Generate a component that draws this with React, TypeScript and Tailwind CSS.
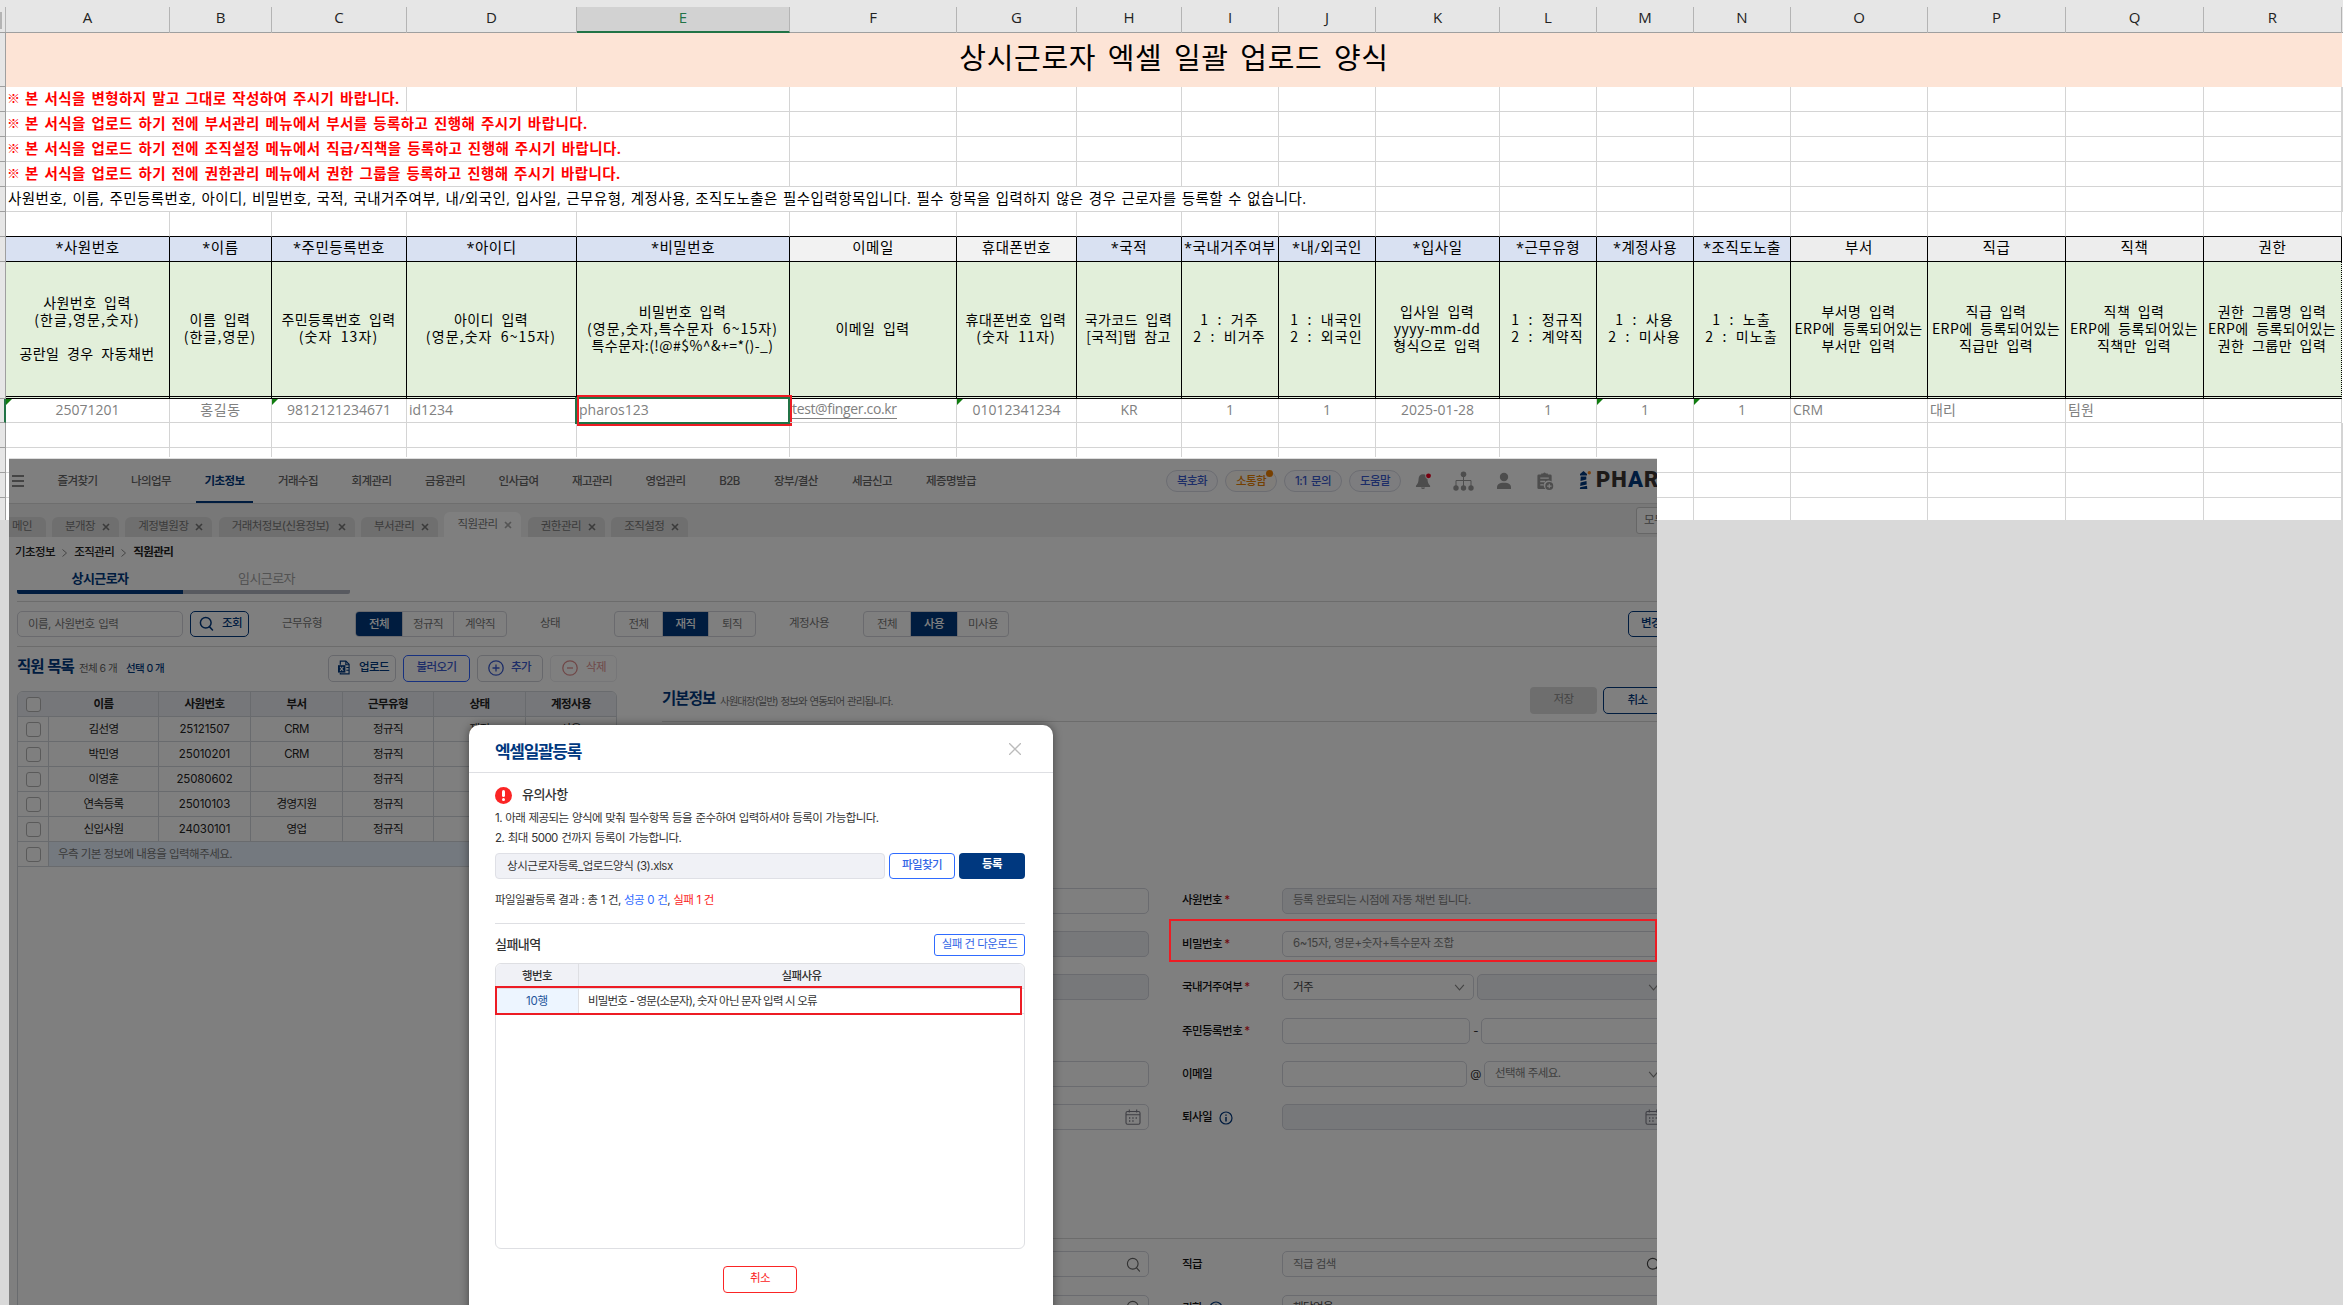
import type { ReactNode } from "react";
import clsx from "clsx";

const GRID =
  "grid grid-cols-[164px_102px_135px_170px_213px_167px_120px_105px_97px_97px_124px_97px_97px_97px_137px_138px_138px_138px_1px]";

type Column = {
  letter: string;
  title: string;
  guide: string[];
  value: string;
  tone: "blue" | "gray" | "silver";
  left?: boolean;
  flag?: boolean;
};

const columns: Column[] = [
  { letter: "A", title: "*사원번호", guide: ["사원번호 입력", "(한글,영문,숫자)", "", "공란일 경우 자동채번"], value: "25071201", tone: "blue", flag: true },
  { letter: "B", title: "*이름", guide: ["이름 입력", "(한글,영문)"], value: "홍길동", tone: "blue" },
  { letter: "C", title: "*주민등록번호", guide: ["주민등록번호 입력", "(숫자 13자)"], value: "9812121234671", tone: "blue", flag: true },
  { letter: "D", title: "*아이디", guide: ["아이디 입력", "(영문,숫자 6~15자)"], value: "id1234", tone: "blue", left: true },
  { letter: "E", title: "*비밀번호", guide: ["비밀번호 입력", "(영문,숫자,특수문자 6~15자)", "특수문자:(!@#$%^&+=*()-_)"], value: "pharos123", tone: "blue", left: true },
  { letter: "F", title: "이메일", guide: ["이메일 입력"], value: "test@finger.co.kr", tone: "gray", left: true },
  { letter: "G", title: "휴대폰번호", guide: ["휴대폰번호 입력", "(숫자 11자)"], value: "01012341234", tone: "gray", flag: true },
  { letter: "H", title: "*국적", guide: ["국가코드 입력", "[국적]탭 참고"], value: "KR", tone: "blue" },
  { letter: "I", title: "*국내거주여부", guide: ["1 : 거주", "2 : 비거주"], value: "1", tone: "blue" },
  { letter: "J", title: "*내/외국인", guide: ["1 : 내국인", "2 : 외국인"], value: "1", tone: "blue" },
  { letter: "K", title: "*입사일", guide: ["입사일 입력", "yyyy-mm-dd", "형식으로 입력"], value: "2025-01-28", tone: "blue" },
  { letter: "L", title: "*근무유형", guide: ["1 : 정규직", "2 : 계약직"], value: "1", tone: "blue" },
  { letter: "M", title: "*계정사용", guide: ["1 : 사용", "2 : 미사용"], value: "1", tone: "blue", flag: true },
  { letter: "N", title: "*조직도노출", guide: ["1 : 노출", "2 : 미노출"], value: "1", tone: "blue", flag: true },
  { letter: "O", title: "부서", guide: ["부서명 입력", "ERP에 등록되어있는", "부서만 입력"], value: "CRM", tone: "silver", left: true },
  { letter: "P", title: "직급", guide: ["직급 입력", "ERP에 등록되어있는", "직급만 입력"], value: "대리", tone: "silver", left: true },
  { letter: "Q", title: "직책", guide: ["직책 입력", "ERP에 등록되어있는", "직책만 입력"], value: "팀원", tone: "silver", left: true },
  { letter: "R", title: "권한", guide: ["권한 그룹명 입력", "ERP에 등록되어있는", "권한 그룹만 입력"], value: "", tone: "silver" },
];

const toneClass = {
  blue: "bg-[#d9e1f2]",
  gray: "bg-[#f2f2f2]",
  silver: "bg-[#ededed]",
};

const notices = [
  { text: "본 서식을 변형하지 말고 그대로 작성하여 주시기 바랍니다.", span: 3 },
  { text: "본 서식을 업로드 하기 전에 부서관리 메뉴에서 부서를 등록하고 진행해 주시기 바랍니다.", span: 5 },
  { text: "본 서식을 업로드 하기 전에 조직설정 메뉴에서 직급/직책을 등록하고 진행해 주시기 바랍니다.", span: 5 },
  { text: "본 서식을 업로드 하기 전에 권한관리 메뉴에서 권한 그룹을 등록하고 진행해 주시기 바랍니다.", span: 5 },
];

function EmptyCells({ count }: { count: number }) {
  return (
    <>
      {Array.from({ length: count }, (_, i) => (
        <div key={i} className="border-r border-b border-[#d4d4d4]" />
      ))}
    </>
  );
}

function SheetRow({ className, gutter, children }: { className: string; gutter?: string; children: ReactNode }) {
  return (
    <div className={clsx("flex", className)}>
      <div className={clsx("w-[6px] shrink-0 border-b bg-[#e6e6e6]", gutter ?? "border-r border-[#9f9f9f]")} />
      <div className={GRID}>{children}</div>
    </div>
  );
}

function Spreadsheet() {
  return (
    <section className="h-[520px] overflow-hidden bg-white font-['Open_Sans','Noto_Sans_CJK_KR',sans-serif]">
      <div className="flex h-[33px] border-b border-[#9f9f9f] bg-[#e6e6e6] pt-[7px]">
        <div className="w-[6px] shrink-0 border-r border-[#b4b4b4]">
          <div className="mt-[5px] h-[17px] w-[2px] bg-[#b4b4b4]" />
        </div>
        <div className={GRID}>
          {columns.map((column) => (
            <div
              key={column.letter}
              className={clsx(
                "flex h-[26px] items-center justify-center border-r border-[#b4b4b4] text-[15px]",
                column.letter === "E" ? "border-b-2 border-b-[#217346] bg-[#d2d2d2] pb-[3px] text-[#217346]" : "pb-[5px] text-[#222]",
              )}
            >
              {column.letter}
            </div>
          ))}
        </div>
      </div>

      <div className="flex h-[54px]">
        <div className="w-[6px] shrink-0 border-r border-b border-[#9f9f9f] bg-[#e6e6e6]" />
        <h1 className="flex w-[2336px] items-center justify-center bg-[#fde4d6] pb-[5px] text-[29px] tracking-[0.7px] [word-spacing:3.3px] text-black">
          상시근로자 엑셀 일괄 업로드 양식
        </h1>
      </div>

      {notices.map((notice) => (
        <SheetRow key={notice.text} className="h-[25px]">
          <div
            className={clsx(
              "flex border-r border-b border-[#d4d4d4] pl-[1px] text-[14.5px] leading-[23px] font-bold tracking-[0.42px] whitespace-nowrap text-[#f00] [word-spacing:1.5px]",
              notice.span === 3 ? "col-span-3" : "col-span-5",
            )}
          >
            <span className="w-[18px] text-[13px]">※</span>
            {notice.text}
          </div>
          <EmptyCells count={19 - notice.span} />
        </SheetRow>
      ))}

      <SheetRow className="h-[25px]">
        <div className="col-span-10 border-r border-b border-[#d4d4d4] pl-[2px] text-[14.5px] leading-[23px] tracking-[0.43px] whitespace-nowrap text-black [word-spacing:1px]">
          사원번호, 이름, 주민등록번호, 아이디, 비밀번호, 국적, 국내거주여부, 내/외국인, 입사일, 근무유형, 계정사용, 조직도노출은
          필수입력항목입니다. 필수 항목을 입력하지 않은 경우 근로자를 등록할 수 없습니다.
        </div>
        <EmptyCells count={9} />
      </SheetRow>

      <SheetRow className="h-[25px]">
        {columns.map((column) => (
          <div key={column.letter} className="border-r border-b border-r-[#d4d4d4] border-b-black" />
        ))}
      </SheetRow>

      <SheetRow className="h-[25px]">
        {columns.map((column) => (
          <div
            key={column.letter}
            className={clsx(
              "flex items-center justify-center border-r border-b border-black pb-[2px] text-[14.5px] tracking-[0.55px] whitespace-nowrap text-black",
              toneClass[column.tone],
            )}
          >
            {column.title}
          </div>
        ))}
      </SheetRow>

      <SheetRow className="h-[137px]">
        {columns.map((column) => (
          <div
            key={column.letter}
            className={clsx(
              "flex flex-col items-center justify-center border-r border-b-3 border-double border-black bg-[#e2efda] pr-px pb-[2px]",
              column.letter === "R" ? "[border-right-style:dotted]" : "[border-right-style:solid]",
            )}
          >
            {column.guide.map((line, i) => (
              <p
                key={i}
                className={clsx(
                  "h-[17px] font-['Noto_Sans_CJK_KR',sans-serif] text-[14px] leading-[17px] whitespace-nowrap text-black [word-spacing:4px]",
                  /^[(\d]/.test(line) ? "tracking-[1.1px]" : "tracking-[0.45px]",
                )}
              >
                {line}
              </p>
            ))}
          </div>
        ))}
      </SheetRow>

      <SheetRow className="h-[24px]" gutter="border-r-2 border-r-[#217346] border-b-[#9f9f9f]">
        {columns.map((column) => (
          <div
            key={column.letter}
            className={clsx(
              "relative flex items-center border-r border-b border-[#d4d4d4] pb-[2px] text-[14px] whitespace-nowrap text-[#808080]",
              column.left ? "pl-[2px]" : "justify-center",
            )}
          >
            {column.flag && (
              <span className="absolute top-0 left-0 border-t-[6px] border-r-[6px] border-t-[#107c10] border-r-transparent" />
            )}
            <span
              className={clsx(
                column.letter === "F" && "border-b border-[#808080] leading-[18px] tracking-[-0.35px]",
                column.letter === "B" && "tracking-[0.6px]",
              )}
            >
              {column.value}
            </span>
            {column.letter === "E" && (
              <>
                <span className="absolute -top-[2px] -right-px -bottom-[2px] -left-[2px] border-2 border-[#217346]" />
                <span className="absolute -top-[4px] -right-[3px] -bottom-[4px] left-0 border-2 border-[#ed1c24]" />
              </>
            )}
          </div>
        ))}
      </SheetRow>

      {[0, 1, 2, 3].map((row) => (
        <SheetRow key={row} className="h-[25px]">
          <EmptyCells count={19} />
        </SheetRow>
      ))}
    </section>
  );
}

const menus = [
  { label: "즐겨찾기", width: "w-[57px]" },
  { label: "나의업무", width: "w-[57px]" },
  { label: "기초정보", width: "w-[57px]", active: true },
  { label: "거래수집", width: "w-[57px]" },
  { label: "회계관리", width: "w-[57px]" },
  { label: "금융관리", width: "w-[57px]" },
  { label: "인사급여", width: "w-[57px]" },
  { label: "재고관리", width: "w-[57px]" },
  { label: "영업관리", width: "w-[57px]" },
  { label: "B2B", width: "w-[38px]" },
  { label: "장부/결산", width: "w-[62px]" },
  { label: "세금신고", width: "w-[57px]" },
  { label: "제증명발급", width: "w-[68px]" },
];

const pageTabs = [
  { label: "분개장", width: "w-[67px]" },
  { label: "계정별원장", width: "w-[87px]" },
  { label: "거래처정보(신용정보)", width: "w-[136px]" },
  { label: "부서관리", width: "w-[77px]" },
  { label: "직원관리", width: "w-[77px]", active: true },
  { label: "권한관리", width: "w-[77px]" },
  { label: "조직설정", width: "w-[77px]" },
];

function SearchIcon({ className }: { className?: string }) {
  return (
    <svg viewBox="0 0 16 16" className={className} fill="none" stroke="currentColor">
      <circle cx="7.2" cy="7.2" r="5.7" />
      <path d="M11.3 11.6 14.4 15" strokeLinecap="round" />
    </svg>
  );
}

function CalendarIcon() {
  return (
    <svg viewBox="0 0 16 16" className="size-4 shrink-0 text-[#7d7d88]" fill="none" stroke="currentColor" strokeWidth="1.1">
      <rect x="1" y="2.5" width="14" height="12.8" rx="1.5" />
      <path d="M1 5.8h14M4.3.6v3M11.7.6v3" />
      <path d="M4 9h1.3M7.3 9h1.3M10.6 9h1.3M4 12h1.3M7.3 12h1.3" strokeWidth="1.5" />
    </svg>
  );
}

function ChevronIcon() {
  return (
    <svg viewBox="0 0 12 8" className="h-[7px] w-[11px] shrink-0" fill="none" stroke="#888" strokeWidth="1.3">
      <path d="m1 1 5 5.6L11 1" />
    </svg>
  );
}

function InfoIcon() {
  return (
    <svg viewBox="0 0 14 14" className="size-[14px] shrink-0" fill="none" stroke="#00387f" strokeWidth="1.2">
      <circle cx="7" cy="7" r="6" />
      <path d="M7 6v4.5M7 3.4v1.4" strokeWidth="1.5" />
    </svg>
  );
}

function HeaderIcons() {
  return (
    <div className="flex items-center text-[#9a9a9a]">
      <svg viewBox="0 0 18 20" className="ml-[14px] h-[19px] w-[17px]" fill="currentColor">
        <path d="M8.5 2.2c-3 0-4.6 2-4.7 5-.1 3.6-.8 5.3-2.8 7.3v1.3h15v-1.3c-2-2-2.7-3.7-2.8-7.3-.1-3-1.7-5-4.7-5ZM6.3 16.4a2.3 2.3 0 0 0 4.4 0Z" />
        <circle cx="14.3" cy="4" r="3.4" fill="#fff" />
        <circle cx="14.3" cy="4" r="2.6" fill="#f00020" />
      </svg>
      <svg viewBox="0 0 21 20" className="ml-[21px] h-[20px] w-[21px]" fill="currentColor">
        <circle cx="10.5" cy="3.2" r="2.8" />
        <circle cx="3" cy="17" r="2.7" />
        <circle cx="10.5" cy="17" r="2.7" />
        <circle cx="18" cy="17" r="2.7" />
        <path d="M10.5 4v12M3 16V9.5h15V16" fill="none" stroke="currentColor" />
      </svg>
      <svg viewBox="0 0 16 18" className="ml-[22px] h-[18px] w-[16px]" fill="currentColor">
        <circle cx="8" cy="5" r="4.2" />
        <path d="M1 17v-1.5c0-3 2-4.7 7-4.7s7 1.7 7 4.7V17Z" />
      </svg>
      <svg viewBox="0 0 18 20" className="ml-[24px] h-[19px] w-[18px]" fill="currentColor">
        <path d="M2.5 2.5H5v-1h2a2 2 0 0 1 3 0h2v1h2.5A1.5 1.5 0 0 1 16 4v6a5 5 0 0 0-6.5 8h-7A1.5 1.5 0 0 1 1 16.5V4a1.5 1.5 0 0 1 1.5-1.5Z" />
        <path d="M4 6.5h9M4 10h5M4 13.5h3.5" stroke="#fff" strokeWidth="1.4" />
        <circle cx="13.5" cy="14.8" r="4.2" />
        <path d="M13.5 12.4v4.8M11.1 14.8h4.8" stroke="#fff" strokeWidth="1.2" />
      </svg>
      <div className="ml-[25px] flex items-center pb-[2px]">
        <svg viewBox="0 0 13 20" className="h-[20px] w-[13px]">
          <path d="M4.5 1 8 4v1.5H1V4Z" fill="#00387f" />
          <path d="M1.7 6.5h5.6v3L1.5 11ZM1.5 12.5l6-1.5.2 3.5-6.5 1.5ZM1.2 17.2l6.8-1.5.3 3.3H.8Z" fill="#00387f" />
          <circle cx="10.3" cy="2.8" r="1.7" fill="#ff8a1e" />
        </svg>
        <span className="ml-[4px] font-['Roboto',sans-serif] text-[22px] leading-none font-black tracking-[1px] text-[#3a3532]">
          PH<span className="text-[#00387f]">A</span>R
        </span>
      </div>
    </div>
  );
}

function AppHeader() {
  return (
    <header className="flex h-[45px] items-stretch border-b border-[#dcdcdc] whitespace-nowrap">
      <div className="mr-[25px] ml-[3px] flex w-[12px] shrink-0 flex-col justify-center gap-[3px]">
        <span className="h-[2px] bg-[#888]" />
        <span className="h-[2px] bg-[#888]" />
        <span className="h-[2px] bg-[#888]" />
      </div>
      <nav className="flex gap-[16.5px]">
        {menus.map((menu) => (
          <div
            key={menu.label}
            className={clsx(
              "flex shrink-0 items-center justify-center border-b-2 pt-[3px] text-[11.5px]",
              menu.width,
              menu.active ? "border-[#00387f] font-bold text-[#00387f]" : "border-transparent font-medium text-[#666]",
            )}
          >
            {menu.label}
          </div>
        ))}
      </nav>
      <div className="ml-[181px] flex shrink-0 items-center gap-[7px] text-[11.5px] font-medium text-[#3a5bd0]">
        <span className="h-[22px] w-[52px] rounded-full border border-[#d8dae4] bg-[#fafbff] text-center leading-[20px]">복호화</span>
        <span className="relative h-[22px] w-[52px] rounded-full border border-[#d8dae4] bg-[#fffaf5] text-center leading-[20px] text-[#e88000]">
          소통함
          <i className="absolute -top-px right-[3px] size-[7px] rounded-full bg-[#f08000]" />
        </span>
        <span className="h-[22px] w-[58px] rounded-full border border-[#d8dae4] bg-[#fafbff] text-center leading-[20px] [word-spacing:2px]">
          1:1 문의
        </span>
        <span className="h-[22px] w-[52px] rounded-full border border-[#d8dae4] bg-[#fafbff] text-center leading-[20px]">도움말</span>
      </div>
      <HeaderIcons />
    </header>
  );
}

function PageTabs() {
  return (
    <div className="flex h-[33px] items-end gap-[6.4px] bg-[#f1f1f1] whitespace-nowrap text-[#777]">
      <div className="h-[20px] w-[36.5px] shrink-0 rounded-tr-[6px] bg-[#dedede] pl-[3px] leading-[19px]">메인</div>
      {pageTabs.map((tab) => (
        <div
          key={tab.label}
          className={clsx(
            "flex shrink-0 items-center justify-between rounded-t-[6px] pr-[9px] pl-[13px]",
            tab.width,
            tab.active ? "h-[25px] bg-white" : "h-[20px] bg-[#dedede]",
          )}
        >
          <span>{tab.label}</span>
          <svg viewBox="0 0 8 8" className="size-[8px]" stroke={tab.active ? "#aaa" : "#777"} strokeWidth="1.6">
            <path d="m1 1 6 6M7 1 1 7" />
          </svg>
        </div>
      ))}
      <div className="-mr-[39px] mb-[3px] ml-auto h-[27px] w-[60px] shrink-0 rounded-[3px] border border-[#ccc] bg-white pl-[7px] leading-[24px]">
        모두
      </div>
    </div>
  );
}

type SegmentOption = { label: string; width: string; active?: boolean };

function Segmented({ options }: { options: SegmentOption[] }) {
  return (
    <div className="flex h-[26px] shrink-0 overflow-hidden rounded-[4px] border border-[#d4d5dc]">
      {options.map((option) => (
        <span
          key={option.label}
          className={clsx(
            "border-r border-[#d4d5dc] text-center leading-[24px] last:border-r-0",
            option.width,
            option.active ? "bg-[#00387f] font-medium text-white" : "text-[#777]",
          )}
        >
          {option.label}
        </span>
      ))}
    </div>
  );
}

function FilterBar() {
  return (
    <div className="ml-[8px] flex h-[46px] items-center border-y border-[#d8d8d8] whitespace-nowrap text-[#777]">
      <div className="h-[26px] w-[166px] rounded-[5px] border border-[#d4d5dc] pl-[10px] leading-[24px] [word-spacing:1px]">
        이름, 사원번호 입력
      </div>
      <div className="ml-[7px] flex h-[26px] w-[59px] items-center gap-[8px] rounded-[5px] border border-[#00387f] pb-px pl-[8px] font-medium text-[#00387f]">
        <SearchIcon className="size-[15px] stroke-[1.6]" />
        조회
      </div>
      <span className="ml-[33px] w-[73px]">근무유형</span>
      <Segmented
        options={[
          { label: "전체", width: "w-[47px]", active: true },
          { label: "정규직", width: "w-[51px]" },
          { label: "계약직", width: "w-[52px]" },
        ]}
      />
      <span className="ml-[33px] w-[74px]">상태</span>
      <Segmented
        options={[
          { label: "전체", width: "w-[48px]" },
          { label: "재직", width: "w-[46px]", active: true },
          { label: "퇴직", width: "w-[46px]" },
        ]}
      />
      <span className="ml-[33px] w-[74px]">계정사용</span>
      <Segmented
        options={[
          { label: "전체", width: "w-[47px]" },
          { label: "사용", width: "w-[47px]", active: true },
          { label: "미사용", width: "w-[50px]" },
        ]}
      />
      <div className="-mr-[31px] ml-auto h-[26px] w-[60px] rounded-[5px] border border-[#00387f] pl-[12px] leading-[23px] font-medium text-[#00387f]">
        변경
      </div>
    </div>
  );
}

const employees = [
  { name: "김선영", no: "25121507", dept: "CRM", status: "재직", account: "사용" },
  { name: "박민영", no: "25010201", dept: "CRM" },
  { name: "이영훈", no: "25080602", dept: "" },
  { name: "연속등록", no: "25010103", dept: "경영지원" },
  { name: "신입사원", no: "24030101", dept: "영업" },
];

const LIST_GRID = "grid h-[25px] grid-cols-[31px_110px_92px_92px_91px_92px_90px] border-b border-[#d3d6dc] text-center leading-[25px]";

function Checkbox() {
  return (
    <span className="flex items-center justify-center">
      <i className="size-[15px] rounded-[3px] border border-[#b4b4b4] bg-white" />
    </span>
  );
}

function EmployeeList() {
  return (
    <div className="w-[600px] shrink-0">
      <div className="flex h-[44px] items-center pb-[2px] whitespace-nowrap">
        <h2 className="w-[62px] pb-[2px] text-[15.5px] font-bold tracking-[-1px] text-[#00387f] [word-spacing:1px]">직원 목록</h2>
        <span className="w-[47px] pt-[2px] text-[10.5px] text-[#666]">전체 6 개</span>
        <span className="pt-[2px] text-[10.5px] font-medium text-[#00387f]">선택 0 개</span>
        <div className="ml-auto flex gap-[7px] leading-[23px]">
          <div className="flex h-[27px] w-[68px] items-center gap-[9px] rounded-[5px] border border-[#cfd0d8] pb-px pl-[9px] font-medium text-[#00387f]">
            <svg viewBox="0 0 13 16" className="h-[15px] w-[12px]" fill="none" stroke="#00387f" strokeWidth="1.3">
              <path d="M2.5 5V1h6L12 4.5V15H2.5v-1" />
              <path d="M8.5 1v4H12M9 8h3M9 11h3" />
              <rect x="0" y="5.5" width="8" height="8" fill="#00387f" stroke="none" />
              <path d="m2.3 7.3 3.4 4.4m0-4.4-3.4 4.4" stroke="#fff" strokeWidth="1.1" />
            </svg>
            업로드
          </div>
          <div className="h-[27px] w-[67px] rounded-[5px] border border-[#2f62ff] text-center font-medium text-[#3a5bd0]">불러오기</div>
          <div className="flex h-[27px] w-[66px] items-center gap-[7px] rounded-[5px] border border-[#cfd0d8] pb-px pl-[10px] font-medium text-[#3a5bd0]">
            <svg viewBox="0 0 16 16" className="size-4" fill="none" stroke="currentColor" strokeWidth="1.3">
              <circle cx="8" cy="8" r="7.2" />
              <path d="M8 4.5v7M4.5 8h7" />
            </svg>
            추가
          </div>
          <div className="flex h-[27px] w-[67px] items-center gap-[8px] rounded-[5px] border border-[#ededf0] pb-px pl-[11px] text-[#e09090]">
            <svg viewBox="0 0 16 16" className="size-4" fill="none" stroke="currentColor" strokeWidth="1.3">
              <circle cx="8" cy="8" r="7.2" />
              <path d="M5 8h6" />
            </svg>
            삭제
          </div>
        </div>
      </div>

      <div className="h-[700px] overflow-hidden rounded-t-[6px] border border-[#d3d6dc] text-[#222]">
        <div className={clsx(LIST_GRID, "bg-[#eceff4] font-bold")}>
          <Checkbox />
          {["이름", "사원번호", "부서", "근무유형", "상태", "계정사용"].map((head) => (
            <span key={head} className="border-r border-[#d3d6dc] last:border-r-0">
              {head}
            </span>
          ))}
        </div>
        {employees.map((employee) => (
          <div key={employee.no} className={clsx(LIST_GRID, "*:border-r *:border-[#d3d6dc]")}>
            <Checkbox />
            <span>{employee.name}</span>
            <span className="text-[11.5px] tracking-[-0.1px]">{employee.no}</span>
            <span>{employee.dept}</span>
            <span>정규직</span>
            <span>{employee.status}</span>
            <span className="border-r-0!">{employee.account}</span>
          </div>
        ))}
        <div className="flex h-[25px] border-b border-[#d3d6dc] bg-[#e9f3ff]">
          <div className="flex w-[31px] justify-center border-r border-[#d3d6dc] bg-white">
            <Checkbox />
          </div>
          <span className="pl-[9px] leading-[24px] text-[#777]">우측 기본 정보에 내용을 입력해주세요.</span>
        </div>
      </div>
    </div>
  );
}

function Field({ className, disabled, children }: { className?: string; disabled?: boolean; children?: ReactNode }) {
  return (
    <div
      className={clsx(
        "flex h-[26px] shrink-0 items-center justify-between rounded-[5px] border border-[#d4d6de] pl-[10px] text-[#808080]",
        disabled && "bg-[#eff1f5]",
        className,
      )}
    >
      {children}
    </div>
  );
}

function FormRow({
  label,
  required,
  info,
  left,
  children,
}: {
  label: string;
  required?: boolean;
  info?: boolean;
  left?: ReactNode;
  children: ReactNode;
}) {
  return (
    <div className="flex h-[43.4px] items-start whitespace-nowrap">
      <div className="w-[487px] shrink-0 pl-[100px]">{left}</div>
      <div className="ml-[33px] flex h-[27px] w-[100px] shrink-0 items-center font-medium text-[#111]">
        {label}
        {required && <span className="ml-[2px] text-[#e01020]">*</span>}
        {info && (
          <span className="ml-[7px]">
            <InfoIcon />
          </span>
        )}
      </div>
      {children}
    </div>
  );
}

function EmployeeForm() {
  return (
    <div className="ml-[45px] w-[1010px] shrink-0">
      <div className="flex h-[75px] items-end border-b border-[#d8d8d8] pb-[7px] whitespace-nowrap">
        <h2 className="mb-[4px] w-[58px] text-[15.5px] font-bold tracking-[-0.9px] text-[#00387f]">기본정보</h2>
        <span className="mb-[4px] text-[10.5px] tracking-[-1px] text-[#777] [word-spacing:1px]">사원대장(일반) 정보와 연동되어 관리됩니다.</span>
        <span className="ml-auto h-[27px] w-[67px] rounded-[4px] bg-[#dcdcdc] text-center leading-[25px] text-[#888]">저장</span>
        <span className="ml-[6px] h-[27px] w-[69px] rounded-[5px] border border-[#00387f] text-center leading-[24px] font-medium text-[#00387f]">
          취소
        </span>
      </div>

      <div className="pt-[165.5px]">
        <FormRow label="사원번호" required left={<Field />}>
          <Field className="w-[392px]" disabled>
            <span className="tracking-[-0.5px]">등록 완료되는 시점에 자동 채번 됩니다.</span>
          </Field>
        </FormRow>
        <FormRow label="비밀번호" required left={<Field disabled />}>
          <Field className="w-[392px]">
            <span className="tracking-[-0.35px]">6~15자, 영문+숫자+특수문자 조합</span>
          </Field>
        </FormRow>
        <FormRow label="국내거주여부" required left={<Field disabled />}>
          <Field className="w-[192px] pr-[8px] text-[#444]!">
            거주 <ChevronIcon />
          </Field>
          <Field className="ml-[3px] w-[192px] pr-[9px]" disabled>
            <span /> <ChevronIcon />
          </Field>
        </FormRow>
        <FormRow label="주민등록번호" required>
          <Field className="w-[188px]" />
          <span className="w-[11px] text-center leading-[26px] text-[#333]">-</span>
          <Field className="w-[188px]" />
        </FormRow>
        <FormRow label="이메일" left={<Field />}>
          <Field className="w-[185px]" />
          <span className="w-[17px] text-center leading-[26px] text-[#333]">@</span>
          <Field className="w-[185px] pr-[9px]">
            선택해 주세요. <ChevronIcon />
          </Field>
        </FormRow>
        <FormRow
          label="퇴사일"
          info
          left={
            <Field className="pr-[7px]">
              <span /> <CalendarIcon />
            </Field>
          }
        >
          <Field className="w-[387px] pr-[7px]" disabled>
            <span /> <CalendarIcon />
          </Field>
        </FormRow>
      </div>

      <div className="mt-[90px] border-t border-[#d8d8d8] pt-[12.5px]">
        <FormRow
          label="직급"
          left={
            <Field className="pr-[7px]">
              <span /> <SearchIcon className="size-[15px] stroke-[1.2] text-[#666]" />
            </Field>
          }
        >
          <Field className="w-[387px] pr-[7px]">
            직급 검색 <SearchIcon className="size-[15px] stroke-[1.2] text-[#444]" />
          </Field>
        </FormRow>
        <FormRow
          label="권한"
          info
          left={
            <Field className="pr-[7px]">
              <span /> <SearchIcon className="size-[15px] stroke-[1.2] text-[#666]" />
            </Field>
          }
        >
          <Field className="w-[392px] text-[#444]!">해당없음</Field>
        </FormRow>
      </div>
    </div>
  );
}

function UploadDialog() {
  return (
    <div className="absolute top-[266px] left-[460px] h-[640px] w-[584px] rounded-t-[10px] bg-white whitespace-nowrap text-[#333] shadow-[0_0_10px_rgba(0,0,0,0.45)]">
      <div className="flex h-[48px] items-center justify-between border-b border-[#dedfe3] pr-[32px] pl-[26px]">
        <h2 className="pt-[8px] text-[17px] font-bold tracking-[-1.3px] text-[#00387f]">엑셀일괄등록</h2>
        <svg viewBox="0 0 12 12" className="size-[12px]" stroke="#bbb" strokeWidth="1.3">
          <path d="m0 0 12 12M12 0 0 12" />
        </svg>
      </div>

      <div className="w-[556px] pt-[12px] pl-[26px]">
        <div className="flex h-[20px] items-center gap-[10px] text-[13px] font-medium">
          <span className="flex size-[17px] flex-col items-center justify-center gap-[1.5px] rounded-full bg-[#fb2525]">
            <i className="h-[7px] w-[2.5px] rounded-full bg-white" />
            <i className="size-[2.5px] rounded-full bg-white" />
          </span>
          유의사항
        </div>
        <p className="mt-[3px] h-[20px] leading-[20px] [word-spacing:0.6px]">
          1. 아래 제공되는 양식에 맞춰 필수항목 등을 준수하여 입력하셔야 등록이 가능합니다.
        </p>
        <p className="h-[20px] leading-[20px] [word-spacing:0.8px]">2. 최대 5000 건까지 등록이 가능합니다.</p>

        <div className="mt-[5px] flex h-[26px] gap-[4px] text-center leading-[23px]">
          <div className="w-[390px] rounded-[4px] border border-[#dfe0e6] bg-[#f0f1f6] pl-[11px] text-left leading-[24px] tracking-[-0.45px]">
            상시근로자등록_업로드양식 (3).xlsx
          </div>
          <span className="w-[66px] rounded-[4px] border border-[#2f6bff] font-medium text-[#3366e6]">파일찾기</span>
          <span className="w-[66px] rounded-[4px] bg-[#00387f] font-bold text-white">등록</span>
        </div>

        <p className="mt-[11px] h-[34px] border-b border-[#dedfe3] leading-[20px] [word-spacing:0.5px]">
          파일일괄등록 결과 : 총 1 건, <span className="text-[#2f6bff]">성공 0 건</span>, <span className="text-[#fb2525]">실패 1 건</span>
        </p>

        <div className="mt-[10px] flex h-[22px] items-center justify-between">
          <span className="text-[13px] font-medium">실패내역</span>
          <span className="h-[22px] w-[91px] rounded-[3px] border border-[#2f6bff] text-center leading-[18px] text-[#3366e6]">실패 건 다운로드</span>
        </div>

        <div className="relative mt-[7px] h-[286px] rounded-[6px] border border-[#dedfe3]">
          <div className="flex h-[25px] rounded-t-[6px] border-b border-[#dedfe3] bg-[#f0f1f6] text-center leading-[24px] font-medium">
            <span className="w-[83px] border-r border-[#dedfe3]">행번호</span>
            <span className="flex-1">실패사유</span>
          </div>
          <div className="flex h-[25px] border-b border-[#dedfe3] leading-[25px]">
            <span className="w-[83px] border-r border-[#dedfe3] bg-[#edf5ff] text-center tracking-[-0.2px] text-[#1f559c]">10행</span>
            <span className="pl-[9px] tracking-[-0.8px]">비밀번호 - 영문(소문자), 숫자 아닌 문자 입력 시 오류</span>
          </div>
          <span className="absolute top-[22px] -left-px h-[29px] w-[527px] border-2 border-[#ed1c24]" />
        </div>

        <div className="mt-[17px] flex justify-center">
          <span className="h-[27px] w-[74px] rounded-[4px] border border-[#fb2525] text-center leading-[23px] text-[#fb2525]">취소</span>
        </div>
      </div>
    </div>
  );
}

function ErpWindow() {
  return (
    <section className="absolute top-[459px] left-[9px] h-[846px] w-[1648px] bg-white shadow-[0_-1px_0_#dedede,0_-2px_0_#fff]">
      <div className="relative h-full overflow-hidden font-['Inter','Noto_Sans_CJK_KR',sans-serif] text-[11.5px] tracking-[-0.55px]">
        <AppHeader />
        <PageTabs />
        <div className="flex h-[28px] items-center gap-[7px] pt-[3px] pl-[6px] font-medium text-[#222]">
          <span>기초정보</span>
          <svg viewBox="0 0 5 8" className="h-[8px] w-[5px]" fill="none" stroke="#888">
            <path d="m.5.5 4 3.5-4 3.5" />
          </svg>
          <span>조직관리</span>
          <svg viewBox="0 0 5 8" className="h-[8px] w-[5px]" fill="none" stroke="#888">
            <path d="m.5.5 4 3.5-4 3.5" />
          </svg>
          <span className="font-bold">직원관리</span>
        </div>
        <div className="mb-[7px] ml-[8px] flex h-[29px] w-[333px] overflow-hidden rounded-b-[2px] text-center text-[13px] leading-[26px]">
          <span className="w-[166px] border-b-4 border-[#00387f] font-bold text-[#00387f]">상시근로자</span>
          <span className="flex-1 border-b-4 border-[#b0b4c0] text-[#a5a5a5]">임시근로자</span>
        </div>
        <FilterBar />
        <div className="ml-[8px] flex">
          <EmployeeList />
          <EmployeeForm />
        </div>

        <div className="absolute inset-0 bg-black/50" />
        <div className="absolute top-[460px] left-[1160px] h-[43px] w-[488px] border-2 border-[#ed1c24]" />
        <UploadDialog />
      </div>
    </section>
  );
}

export default function App() {
  return (
    <main className="relative h-[1305px] w-[2343px] overflow-hidden bg-[#d9d9d9]">
      <Spreadsheet />
      <ErpWindow />
    </main>
  );
}
